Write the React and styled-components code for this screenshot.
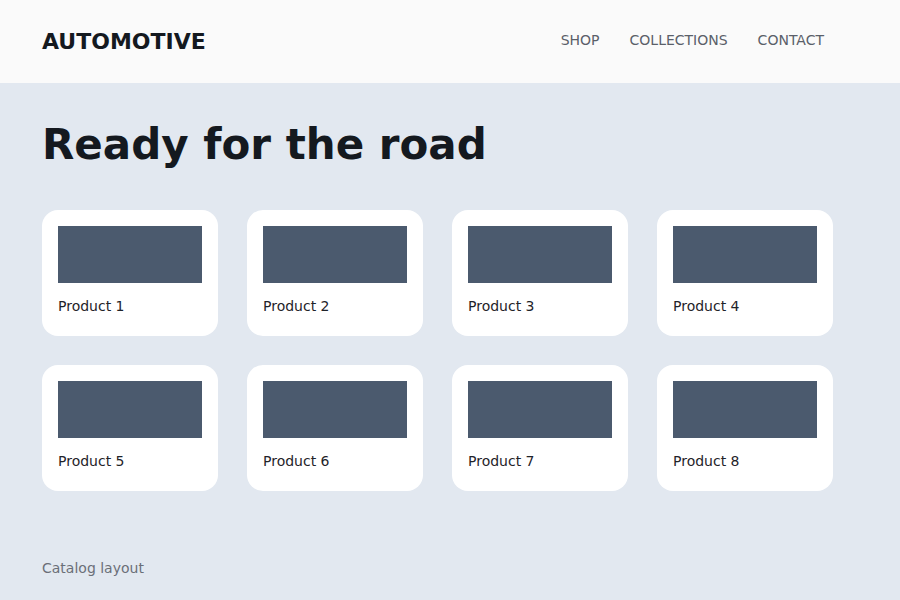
import React from "react";
import styled, { createGlobalStyle } from "styled-components";

const products = [1, 2, 3, 4, 5, 6, 7, 8].map((n) => `Product ${n}`);

const App = () => {
  return (
    <>
      <GlobalStyle />
      <Page>
        <Header>
          <Logo>AUTOMOTIVE</Logo>
          <Nav>
            <NavLink>SHOP</NavLink>
            <NavLink>COLLECTIONS</NavLink>
            <NavLink>CONTACT</NavLink>
          </Nav>
        </Header>

        <Main>
          <Title>Ready for the road</Title>
          <Grid>
            {products.map((name) => (
              <Card key={name}>
                <Thumb />
                <CardName>{name}</CardName>
              </Card>
            ))}
          </Grid>
        </Main>

        <Footer>Catalog layout</Footer>
      </Page>
    </>
  );
};

const GlobalStyle = createGlobalStyle`
  html, body {
    margin: 0;
    padding: 0;
    background-color: #e2e8f0;
    font-family: "DejaVu Sans", "Liberation Sans", sans-serif;
  }
`;

const Page = styled.div`
  min-height: 100vh;
  display: flex;
  flex-direction: column;
  background-color: #e2e8f0;
`;

const Header = styled.header`
  height: 83px;
  padding: 0 76px 0 42px;
  display: flex;
  align-items: center;
  justify-content: space-between;
  background-color: #fafafa;
`;

const Logo = styled.div`
  font-size: 22px;
  font-weight: 700;
  color: #14191f;
`;

const Nav = styled.nav`
  display: flex;
  gap: 30px;
  margin-top: -4px;
`;

const NavLink = styled.a`
  font-size: 14px;
  color: #5a5f69;
  text-decoration: none;
`;

const Main = styled.main`
  padding: 37px 42px 0;
`;

const Title = styled.h1`
  margin: 0 0 41px;
  font-size: 42px;
  font-weight: 700;
  color: #14191f;
`;

const Grid = styled.div`
  display: grid;
  grid-template-columns: repeat(4, 176px);
  gap: 29px;
`;

const Card = styled.div`
  height: 126px;
  box-sizing: border-box;
  padding: 16px;
  background-color: #fff;
  border-radius: 16px;
`;

const Thumb = styled.div`
  height: 57px;
  background-color: #4b5a6e;
`;

const CardName = styled.div`
  margin-top: 13px;
  font-size: 14px;
  line-height: 20px;
  color: #1f2329;
`;

const Footer = styled.footer`
  margin-top: auto;
  padding: 0 42px 24px;
  font-size: 14px;
  color: #6b6f78;
`;

export default App;
